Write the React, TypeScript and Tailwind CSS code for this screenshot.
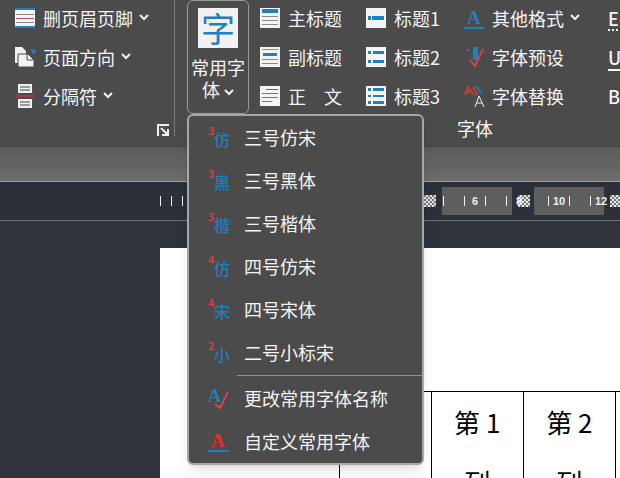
import { type ReactNode } from 'react'
import clsx from 'clsx'

// ─── Icons ───────────────────────────────────────────────────────────────────

interface Bar {
  x: number
  y: number
  w: number
  h: number
  fill: string
}

const BLUE = '#1f7fbf'
const GREY = '#8a8a8a'
const RED = '#d8434b'

function SheetIcon({ bars }: { bars: Bar[] }) {
  return (
    <svg width="20" height="20" viewBox="0 0 20 20" className="shrink-0" aria-hidden="true">
      <rect width="20" height="20" fill="#f3f3f3" />
      {bars.map((b, i) => (
        <rect key={i} x={b.x} y={b.y} width={b.w} height={b.h} fill={b.fill} />
      ))}
    </svg>
  )
}

const headerBars: Bar[] = [
  { x: 0, y: 0, w: 20, h: 2, fill: BLUE },
  { x: 1, y: 6, w: 18, h: 1, fill: GREY },
  { x: 1, y: 10, w: 18, h: 1, fill: '#a8506a' },
  { x: 1, y: 14, w: 18, h: 1, fill: GREY },
  { x: 0, y: 18, w: 20, h: 2, fill: BLUE },
]

const titleBars: Bar[] = [
  { x: 2, y: 1, w: 16, h: 4, fill: BLUE },
  { x: 2, y: 8, w: 16, h: 1, fill: GREY },
  { x: 2, y: 12, w: 16, h: 1, fill: GREY },
  { x: 2, y: 16, w: 16, h: 1, fill: GREY },
]

const subtitleBars: Bar[] = [
  { x: 2, y: 2, w: 16, h: 1, fill: GREY },
  { x: 3, y: 6, w: 14, h: 3, fill: BLUE },
  { x: 2, y: 12, w: 16, h: 1, fill: GREY },
  { x: 2, y: 16, w: 16, h: 1, fill: GREY },
]

const bodyBars: Bar[] = [
  { x: 6, y: 3, w: 12, h: 1, fill: '#666' },
  { x: 2, y: 7, w: 16, h: 1, fill: '#777' },
  { x: 2, y: 11, w: 16, h: 1, fill: '#777' },
  { x: 2, y: 15, w: 10, h: 1, fill: '#777' },
]

const heading1Bars: Bar[] = [
  { x: 2, y: 8, w: 3, h: 4, fill: BLUE },
  { x: 6, y: 8, w: 12, h: 4, fill: BLUE },
]

const heading2Bars: Bar[] = [
  { x: 2, y: 4, w: 3, h: 3, fill: BLUE },
  { x: 7, y: 4, w: 11, h: 3, fill: BLUE },
  { x: 2, y: 13, w: 3, h: 3, fill: BLUE },
  { x: 7, y: 13, w: 11, h: 3, fill: BLUE },
]

const heading3Bars: Bar[] = [
  { x: 2, y: 2, w: 3, h: 3, fill: BLUE },
  { x: 7, y: 2, w: 11, h: 3, fill: BLUE },
  { x: 2, y: 9, w: 3, h: 2, fill: BLUE },
  { x: 7, y: 9, w: 11, h: 2, fill: BLUE },
  { x: 2, y: 15, w: 3, h: 3, fill: BLUE },
  { x: 7, y: 15, w: 11, h: 3, fill: BLUE },
]

function OrientationIcon() {
  return (
    <svg width="22" height="20" viewBox="0 0 22 20" className="shrink-0" aria-hidden="true">
      <path d="M1 0h7l4 4v12H1z" fill="#f0f0f0" />
      <path d="M4 7h10l6 6v7H4z" fill="#f3f3f3" stroke="#4b4b4b" />
      <path d="M13 7v6h6" fill="none" stroke="#4b4b4b" />
      <path d="M16 2l6 1-2 5z" fill={BLUE} />
    </svg>
  )
}

function BreakIcon() {
  return (
    <svg width="20" height="26" viewBox="0 0 20 26" className="shrink-0" aria-hidden="true">
      <path d="M3 1h14v9H3zM3 16h14v9H3z" fill="#f0f0f0" />
      <path d="M5 4h10M5 7h10M5 19h10M5 22h10" stroke="#444" />
      <path d="M3 13h14M2 11v4M18 11v4" stroke="#a33a4c" strokeWidth="2" />
    </svg>
  )
}

function LauncherIcon() {
  return (
    <svg width="12" height="12" viewBox="0 0 12 12" fill="none" stroke="#f0f0f0" strokeWidth="2" aria-hidden="true">
      <path d="M1 12V1h11" />
      <path d="M4 4l6 6M11 5v6H5" />
    </svg>
  )
}

function LetterIcon({ kind }: { kind: 'format' | 'preset' | 'replace' | 'rename' | 'custom' }) {
  return (
    <svg
      width="22"
      height="24"
      viewBox="0 0 22 24"
      className="shrink-0 overflow-visible font-['Liberation_Serif',serif] font-bold"
      aria-hidden="true"
    >
      {kind === 'format' && (
        <>
          <text x="4" y="18" fontSize="19" fill={BLUE}>A</text>
          <path d="M1 22h20" stroke={BLUE} strokeWidth="2" />
        </>
      )}
      {kind === 'preset' && (
        <>
          <path d="M4 5h3M11 3h3v11h-3z" fill={BLUE} stroke={BLUE} strokeWidth="2" />
          <path d="M7 15l5 6 8-17" fill="none" stroke={RED} strokeWidth="2" />
        </>
      )}
      {kind === 'replace' && (
        <>
          <path d="M2 11l3-8 6 8M3 9l5-2" fill="none" stroke="#c4402f" strokeWidth="2" />
          <path d="M10 3l4 8" stroke="#c4402f" strokeWidth="2" />
          <path d="M13 2l5 7" stroke={BLUE} strokeWidth="2" />
          <path d="M12 23l4-11 5 11M14 19h5" fill="none" stroke="#f0f0f0" />
        </>
      )}
      {kind === 'rename' && (
        <>
          <text x="0" y="15" fontSize="18" fill={BLUE}>A</text>
          <path d="M7 17l5 4 8-16" fill="none" stroke={RED} strokeWidth="2" />
        </>
      )}
      {kind === 'custom' && (
        <>
          <text x="3" y="17" fontSize="19" fill="#e0302e">A</text>
          <path d="M0 21h21" stroke={BLUE} strokeWidth="2" />
        </>
      )}
    </svg>
  )
}

// Small red size number with the typeface's character beside it
function FontSizeIcon({ size, glyph }: { size: string; glyph: string }) {
  return (
    <svg width="22" height="24" viewBox="0 0 22 24" className="shrink-0 overflow-visible font-medium" aria-hidden="true">
      <text x="0" y="9" fontSize="11" fill={RED}>{size}</text>
      <text x="6" y="20" fontSize="16" fill={BLUE}>{glyph}</text>
    </svg>
  )
}

function Chevron() {
  return (
    <svg width="10" height="7" viewBox="0 0 10 7" fill="none" stroke="currentColor" strokeWidth="2" className="inline-block shrink-0" aria-hidden="true">
      <path d="M1 1l4 4 4-4" />
    </svg>
  )
}

// ─── Ribbon ──────────────────────────────────────────────────────────────────

interface RibbonButtonProps {
  icon: ReactNode
  label: string
  dropdown?: boolean
}

function RibbonButton({ icon, label, dropdown }: RibbonButtonProps) {
  return (
    <button type="button" className="flex items-center gap-2 h-[39px] pb-1 whitespace-pre">
      <span className="flex w-5 justify-center">{icon}</span>
      <span className="flex items-center gap-1.5">
        {label}
        {dropdown && <Chevron />}
      </span>
    </button>
  )
}

function Ribbon() {
  return (
    <header className="flex h-[147px] shrink-0 bg-[#4b4b4b] border-b border-[#444] text-lg leading-6 text-[#f4f4f4] overflow-hidden">
      <section aria-label="页面设置" className="relative w-[175px] shrink-0 mb-2.5 pl-[15px] border-r border-[#7a7a7a]">
        <RibbonButton icon={<SheetIcon bars={headerBars} />} label="删页眉页脚" dropdown />
        <RibbonButton icon={<OrientationIcon />} label="页面方向" dropdown />
        <RibbonButton icon={<BreakIcon />} label="分隔符" dropdown />
        <button type="button" aria-label="更多页面设置" className="absolute right-[5px] bottom-0">
          <LauncherIcon />
        </button>
      </section>

      <section aria-label="字体" className="flex flex-col flex-1 min-w-0 pl-3">
        <div className="flex">
          <button
            type="button"
            aria-haspopup="menu"
            aria-expanded="true"
            className="flex flex-col items-center shrink-0 w-[62px] h-[114px] pt-[7px] border border-[#999] rounded-md"
          >
            <span className="flex items-center justify-center w-10 h-10 bg-[#f1f1f1] text-[34px] leading-none text-[#1f7fbf]">
              字
            </span>
            <span className="mt-2 w-[54px] leading-[22px] break-all">
              常用字体 <Chevron />
            </span>
          </button>
          <div className="ml-[11px] shrink-0">
            <RibbonButton icon={<SheetIcon bars={titleBars} />} label="主标题" />
            <RibbonButton icon={<SheetIcon bars={subtitleBars} />} label="副标题" />
            <RibbonButton icon={<SheetIcon bars={bodyBars} />} label="正　文" />
          </div>
          <div className="ml-6 shrink-0">
            <RibbonButton icon={<SheetIcon bars={heading1Bars} />} label="标题1" />
            <RibbonButton icon={<SheetIcon bars={heading2Bars} />} label="标题2" />
            <RibbonButton icon={<SheetIcon bars={heading3Bars} />} label="标题3" />
          </div>
          <div className="ml-6 shrink-0">
            <RibbonButton icon={<LetterIcon kind="format" />} label="其他格式" dropdown />
            <RibbonButton icon={<LetterIcon kind="preset" />} label="字体预设" />
            <RibbonButton icon={<LetterIcon kind="replace" />} label="字体替换" />
          </div>
          <div className="ml-7 shrink-0 font-medium">
            <button type="button" aria-label="着重号" className="flex items-center h-[39px] pb-1 underline decoration-dotted decoration-2 underline-offset-4">E</button>
            <button type="button" aria-label="下划线" className="flex items-center h-[39px] pb-1 underline decoration-2 underline-offset-4">U</button>
            <button type="button" aria-label="加粗" className="flex items-center h-[39px] pb-1">B</button>
          </div>
        </div>
        <p className="-mt-px pl-[270px]">字体</p>
      </section>
    </header>
  )
}

// ─── Dropdown menu ───────────────────────────────────────────────────────────

const presets = [
  { size: '3', glyph: '仿', label: '三号仿宋' },
  { size: '3', glyph: '黑', label: '三号黑体' },
  { size: '3', glyph: '楷', label: '三号楷体' },
  { size: '4', glyph: '仿', label: '四号仿宋' },
  { size: '4', glyph: '宋', label: '四号宋体' },
  { size: '2', glyph: '小', label: '二号小标宋' },
]

function MenuItem({ icon, label }: { icon: ReactNode; label: string }) {
  return (
    <button type="button" role="menuitem" className="flex items-center gap-3.5 w-full h-[43px] pl-[19px] text-left">
      {icon}
      <span className="pb-0.5">{label}</span>
    </button>
  )
}

function FontMenu() {
  return (
    <div
      role="menu"
      className="absolute left-[187px] top-[114px] w-[237px] bg-[#4b4b4b] border-2 border-[#a6a6a6] rounded-md shadow-lg text-lg leading-6 text-[#f4f4f4]"
    >
      {presets.map((p) => (
        <MenuItem key={p.label} icon={<FontSizeIcon size={p.size} glyph={p.glyph} />} label={p.label} />
      ))}
      <hr className="my-px ml-12 border-[#8f8f8f]" />
      <MenuItem icon={<LetterIcon kind="rename" />} label="更改常用字体名称" />
      <MenuItem icon={<LetterIcon kind="custom" />} label="自定义常用字体" />
    </div>
  )
}

// ─── Ruler ───────────────────────────────────────────────────────────────────

function Tick() {
  return <span className="w-px h-2.5 shrink-0 bg-[#eee]" />
}

function RulerNumber({ value }: { value: number }) {
  return <span className="w-5 shrink-0 text-center">{value}</span>
}

function ColumnMarker({ className }: { className?: string }) {
  return (
    <span
      className={clsx(
        'w-3 h-3 shrink-0 bg-[repeating-conic-gradient(#e6e6e6_0_25%,#77777f_0_50%)] bg-[size:4px_4px]',
        className,
      )}
    />
  )
}

function Ruler() {
  return (
    <div className="flex items-center h-[39px] shrink-0 bg-[#2c3038] border-b border-[#6f7277] overflow-hidden font-['Liberation_Sans',sans-serif] text-[11px] leading-none font-bold text-[#eee]">
      <div className="flex justify-between w-[23px] ml-40 shrink-0">
        <Tick />
        <Tick />
        <Tick />
      </div>
      <ColumnMarker className="ml-[241px]" />
      <div className="flex items-center ml-1.5 w-[70px] h-7 pl-px bg-[#5e5e5e] shrink-0">
        <Tick />
        <span className="w-5" />
        <Tick />
        <RulerNumber value={6} />
        <Tick />
        <span className="w-5" />
        <Tick />
      </div>
      <span className="relative ml-1 shrink-0">8</span>
      <ColumnMarker className="-ml-1" />
      <div className="flex items-center ml-1 w-[70px] h-7 pl-3.5 bg-[#5e5e5e] shrink-0">
        <Tick />
        <RulerNumber value={10} />
        <Tick />
        <span className="w-5 shrink-0" />
        <Tick />
        <RulerNumber value={12} />
      </div>
      <ColumnMarker className="ml-1.5" />
    </div>
  )
}

// ─── Document ────────────────────────────────────────────────────────────────

function DocumentPage() {
  return (
    <main className="flex-1 pt-[27px] pl-40 bg-[#2f333b] overflow-hidden">
      <div className="h-full min-h-[230px] pt-[143px] pl-[87px] bg-white overflow-hidden">
        <table className="table-fixed border-collapse w-[461px] text-[26px] leading-[60px] text-black text-center">
          <tbody>
            <tr>
              <td className="w-[92px] border-t border-r border-black" />
              <td className="w-[92px] border border-black" />
              {['1', '2', ''].map((n) => (
                <td key={n} className="w-[92px] p-0 border border-black align-top">
                  {n && (
                    <>
                      第 {n}
                      <br />
                      列
                    </>
                  )}
                </td>
              ))}
            </tr>
          </tbody>
        </table>
      </div>
    </main>
  )
}

export default function App() {
  return (
    <div className="relative flex flex-col h-screen overflow-hidden font-['Noto_Sans_CJK_SC',sans-serif]">
      <Ribbon />
      <div className="h-[35px] shrink-0 bg-linear-to-b from-[#5a5a5a] to-[#6d6d6d] border-b border-[#a0a0a0]" />
      <Ruler />
      <DocumentPage />
      <FontMenu />
    </div>
  )
}
